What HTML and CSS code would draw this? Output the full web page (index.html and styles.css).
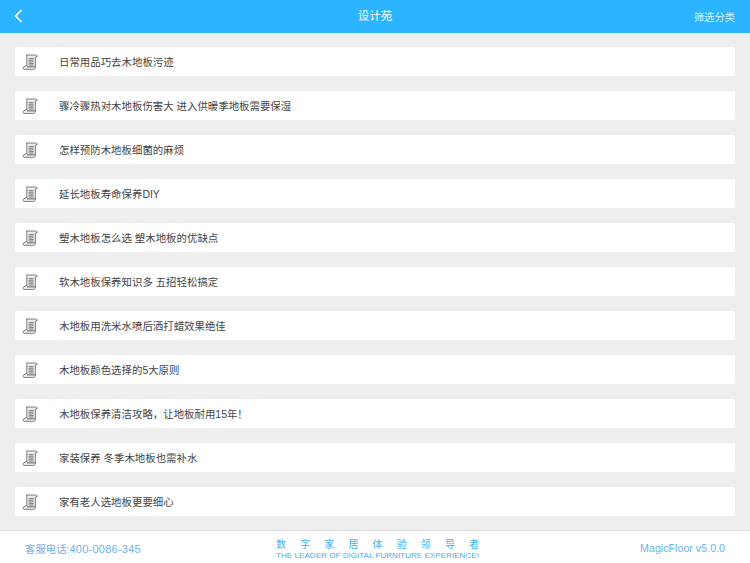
FILE: index.html
```html
<!DOCTYPE html>
<html lang="zh">
<head>
<meta charset="utf-8">
<title>设计苑</title>
<link rel="stylesheet" href="styles.css">
</head>
<body>
<svg class="defs" width="0" height="0" aria-hidden="true">
  <symbol id="scroll" viewBox="0 0 16 16">
    <path d="M4 1H13.5C14.6 1 15.3 1.6 15.3 2.5L13.4 3V13H4.8V2.5C4.8 1.7 4.5 1.2 4 1Z" fill="#ececec" stroke="#707070" stroke-width=".9"/>
    <path d="M6.6 4.6H11.6M6.6 6.2H11.6M6.6 7.8H11.6M6.6 9.4H11.6M6.6 11H11.6" stroke="#7c7c7c" stroke-width="1"/>
    <path d="M4.8 11.2 1.2 13.3C.5 14.3 1 15.4 2.2 15.4H11.6C12.7 15.4 13.4 14.4 13.4 13H5" fill="#f0f0f0" stroke="#707070" stroke-width=".9"/>
  </symbol>
</svg>
<div class="page">
  <header class="top">
    <button class="back" aria-label="返回">
      <svg width="9" height="14" viewBox="0 0 9 14"><path d="M7.5 1 1.7 7l5.8 6" fill="none" stroke="#fff" stroke-width="1.7"/></svg>
    </button>
    <h1 class="title">设计苑</h1>
    <span class="filter">筛选分类</span>
  </header>
  <main class="list">
    <div class="row"><svg class="icon"><use href="#scroll"/></svg><span>日常用品巧去木地板污迹</span></div>
    <div class="row"><svg class="icon"><use href="#scroll"/></svg><span>骤冷骤热对木地板伤害大 进入供暖季地板需要保湿</span></div>
    <div class="row"><svg class="icon"><use href="#scroll"/></svg><span>怎样预防木地板细菌的麻烦</span></div>
    <div class="row"><svg class="icon"><use href="#scroll"/></svg><span>延长地板寿命保养DIY</span></div>
    <div class="row"><svg class="icon"><use href="#scroll"/></svg><span>塑木地板怎么选 塑木地板的优缺点</span></div>
    <div class="row"><svg class="icon"><use href="#scroll"/></svg><span>软木地板保养知识多 五招轻松搞定</span></div>
    <div class="row"><svg class="icon"><use href="#scroll"/></svg><span>木地板用洗米水喷后洒打蜡效果绝佳</span></div>
    <div class="row"><svg class="icon"><use href="#scroll"/></svg><span>木地板颜色选择的5大原则</span></div>
    <div class="row"><svg class="icon"><use href="#scroll"/></svg><span>木地板保养清洁攻略，让地板耐用15年！</span></div>
    <div class="row"><svg class="icon"><use href="#scroll"/></svg><span>家装保养 冬季木地板也需补水</span></div>
    <div class="row"><svg class="icon"><use href="#scroll"/></svg><span>家有老人选地板更要细心</span></div>
  </main>
  <footer class="bottom">
    <span class="phone">客服电话:<span class="digits">400-0086-345</span></span>
    <div class="slogan">
      <div class="cn"><span>数</span><span>字</span><span>家</span><span>居</span><span>体</span><span>验</span><span>领</span><span>导</span><span>者</span></div>
      <div class="en">THE LEADER OF DIGITAL FURNITURE EXPERIENCE!</div>
    </div>
    <span class="version">MagicFloor v5.0.0</span>
  </footer>
</div>
</body>
</html>
```

FILE: styles.css
```css
* { box-sizing: border-box; }
html, body { margin: 0; height: 100%; overflow: hidden; }
body { font-family: "Liberation Sans", "Noto Sans CJK SC", sans-serif; background: #eee; }
.defs { display: block; height: 0; }
.page { width: 750px; height: 563px; display: flex; flex-direction: column; }
.top {
  height: 33px; flex: none; background: #2cb5ff; color: #fff;
  display: flex; align-items: center; justify-content: space-between;
  position: relative; padding: 0 15px 1px 14px;
}
.back { background: none; border: 0; padding: 0; display: flex; }
.title { position: absolute; left: 0; right: 0; top: 9px; margin: 0; text-align: center; font-size: 11.5px; line-height: 15px; font-weight: 400; }
.filter { font-size: 10.3px; color: #d8f1ff; }
.list { flex: 1; min-height: 0; padding: 14px 15px 0; display: flex; flex-direction: column; gap: 15px; overflow: hidden; background: #eee; }
.row {
  height: 29px; flex: none; background: #fff; border-radius: 2px;
  display: flex; align-items: center; padding-left: 7px;
  font-size: 10.43px; color: #444;
}
.icon { width: 16px; height: 16px; margin-right: 21px; flex: none; }
.bottom {
  height: 33px; flex: none; background: #fff; border-top: 1px solid #e2e2e2;
  display: grid; grid-template-columns: 1fr auto 1fr; align-items: center;
  padding: 2px 25px 0; color: #6bb3e8; font-size: 10.4px;
}
.digits { font-size: 11px; letter-spacing: .25px; }
.slogan { width: 203px; color: #3fb2f0; margin-left: 5px; padding-top: 3px; }
.cn { display: flex; justify-content: space-between; font-size: 10px; line-height: 12px; }
.en { font-size: 8.1px; line-height: 9px; white-space: nowrap; text-align: center; }
.version { justify-self: end; font-size: 10.7px; }
```
